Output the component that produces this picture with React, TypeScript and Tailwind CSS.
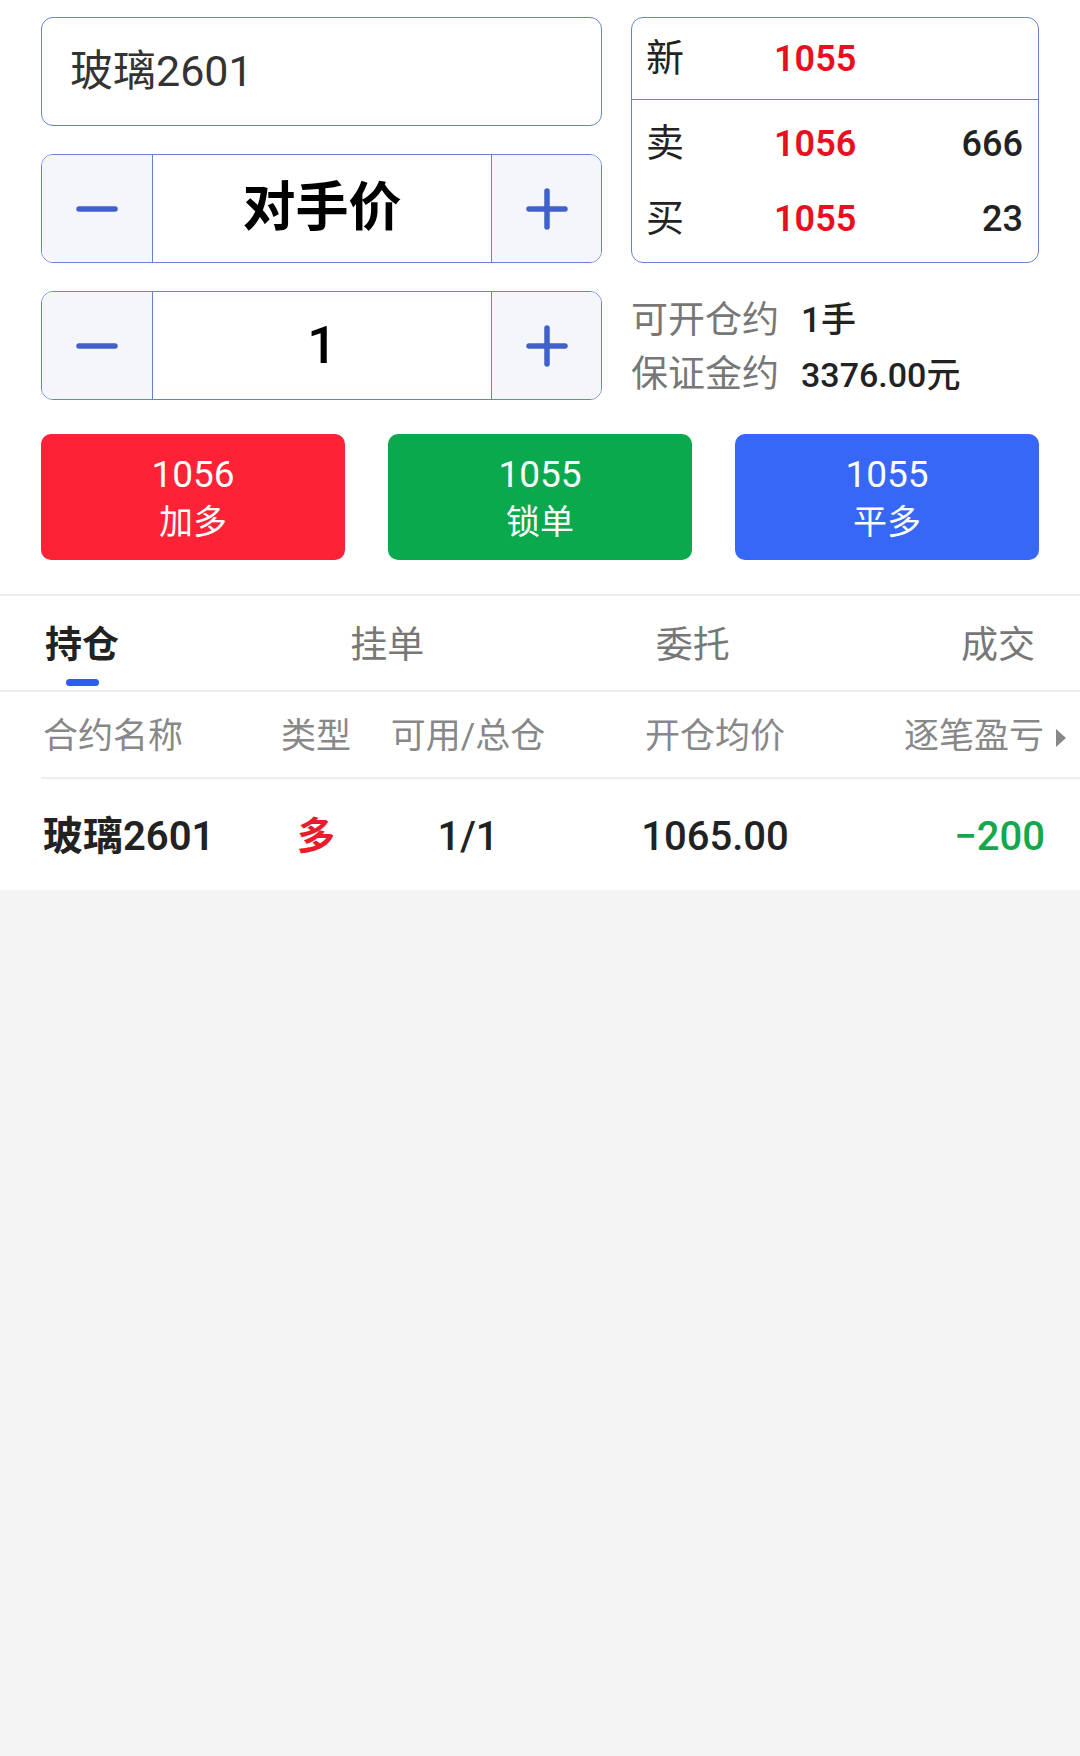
import { FC } from 'react';

const font = "font-['Roboto','Noto_Sans_CJK_SC',sans-serif]";

const MinusIcon: FC = () => (
    <svg width="42" height="42" viewBox="0 0 42 42">
        <line x1="3" y1="21" x2="39" y2="21" stroke="#4061c9" strokeWidth="5.5" strokeLinecap="round" />
    </svg>
);

const PlusIcon: FC = () => (
    <svg width="42" height="42" viewBox="0 0 42 42">
        <line x1="3" y1="21" x2="39" y2="21" stroke="#4061c9" strokeWidth="5.5" strokeLinecap="round" />
        <line x1="21" y1="3" x2="21" y2="39" stroke="#4061c9" strokeWidth="5.5" strokeLinecap="round" />
    </svg>
);

interface StepperProps {
    children: React.ReactNode;
}

const Stepper: FC<StepperProps> = ({ children }) => (
    <div className="flex h-[109px] rounded-[12px] border-[1.5px] border-[#6583d3] overflow-hidden">
        <div className="w-[111px] flex items-center justify-center bg-[#f4f6fc] border-r-[1.5px] border-[#6583d3]">
            <MinusIcon />
        </div>
        <div className="flex-1 flex items-center justify-center bg-white">{children}</div>
        <div className="w-[110px] flex items-center justify-center bg-[#f4f6fc] border-l-[1.5px] border-[#6583d3]">
            <PlusIcon />
        </div>
    </div>
);

const QuoteRow: FC<{ label: string; price: string; qty?: string }> = ({ label, price, qty }) => (
    <div className="flex items-center h-[75px] pl-[14px] pr-[15px]">
        <span className="w-[128px] text-[38px] text-[#222]">{label}</span>
        <span className="text-[36px] font-semibold text-[#ea0f1f]">{price}</span>
        <span className="ml-auto text-[36px] font-medium text-[#222]">{qty}</span>
    </div>
);

const ActionButton: FC<{ price: string; label: string; color: string }> = ({ price, label, color }) => (
    <div className={`flex-1 h-[126px] pt-[6px] rounded-[10px] flex flex-col items-center justify-center text-white ${color}`}>
        <span className="text-[37px] leading-[44px]">{price}</span>
        <span className="text-[34px] leading-[50px]">{label}</span>
    </div>
);

const App: FC = () => {
    const tabs = ['持仓', '挂单', '委托', '成交'];

    return (
        <div className={`min-h-[1756px] bg-[#f4f4f4] ${font}`}>
            <div className="bg-white">
                {/* order panel */}
                <div className="px-[41px] pt-[17px] pb-[34px]">
                    <div className="flex gap-[29px]">
                        <div className="w-[561px] flex flex-col gap-[28px]">
                            <div className="h-[109px] rounded-[12px] border-[1.5px] border-[#6583d3] flex items-center pl-[28px]">
                                <span className="text-[43px] text-[#333]">玻璃2601</span>
                            </div>
                            <Stepper>
                                <span className="text-[53px] font-bold text-black">对手价</span>
                            </Stepper>
                            <Stepper>
                                <span className="text-[52px] font-medium text-black">1</span>
                            </Stepper>
                        </div>
                        <div className="flex-1 flex flex-col">
                            <div className="h-[246px] rounded-[12px] border-[1.5px] border-[#6583d3] overflow-hidden">
                                <div className="h-[82px] border-b-[1.5px] border-[#6583d3] flex items-center">
                                    <QuoteRow label="新" price="1055" />
                                </div>
                                <div className="py-[6px]">
                                    <QuoteRow label="卖" price="1056" qty="666" />
                                    <QuoteRow label="买" price="1055" qty="23" />
                                </div>
                            </div>
                            <div className="mt-[33px] flex flex-col gap-[4px]">
                                <div className="flex items-center h-[50px]">
                                    <span className="text-[37px] text-[#777]">可开仓约</span>
                                    <span className="ml-[22px] text-[35px] font-medium text-[#222]">1手</span>
                                </div>
                                <div className="flex items-center h-[50px]">
                                    <span className="text-[37px] text-[#777]">保证金约</span>
                                    <span className="ml-[22px] text-[34px] font-medium text-[#222]">3376.00元</span>
                                </div>
                            </div>
                        </div>
                    </div>

                    <div className="mt-[34px] flex gap-[43px]">
                        <ActionButton price="1056" label="加多" color="bg-[#fe2237]" />
                        <ActionButton price="1055" label="锁单" color="bg-[#0aa94d]" />
                        <ActionButton price="1055" label="平多" color="bg-[#3767f7]" />
                    </div>
                </div>

                {/* tabs */}
                <div className="border-t-[2px] border-[#ececec] border-b-[2px] h-[98px] flex justify-between px-[45px] pt-[28px]">
                    {tabs.map((t, i) => (
                        <div key={t} className="flex flex-col items-center">
                            <span className={`text-[37px] leading-[44px] ${i === 0 ? 'font-semibold text-[#222]' : 'text-[#777]'}`}>{t}</span>
                            {i === 0 && <span className="mt-[11px] w-[33px] h-[7px] rounded-full bg-[#2d5cf0]" />}
                        </div>
                    ))}
                </div>

                {/* positions table */}
                <div className="pl-[41px]">
                    <div className="h-[87px] pt-[6px] flex items-center border-b-[2px] border-[#ededed] text-[35px] text-[#888] whitespace-nowrap">
                        <span className="w-[235px] pl-[2px]">合约名称</span>
                        <span className="w-[80px] text-center">类型</span>
                        <span className="w-[200px] text-center ml-[12px]">可用/总仓</span>
                        <span className="w-[160px] text-center ml-[67px]">开仓均价</span>
                        <span className="ml-auto flex items-center">
                            逐笔盈亏
                            <svg width="14" height="22" viewBox="0 0 14 22" className="ml-[10px] mr-[12px]">
                                <path d="M2 2 L12 11 L2 20 Z" fill="#888" />
                            </svg>
                        </span>
                    </div>
                    <div className="h-[111px] pt-[4px] flex items-center whitespace-nowrap">
                        <span className="w-[235px] pl-[2px] text-[40px] font-semibold text-[#222]">玻璃2601</span>
                        <span className="w-[80px] text-center text-[38px] font-semibold text-[#ea1c2c]">多</span>
                        <span className="w-[200px] text-center ml-[12px] text-[40px] font-medium text-[#222]">1/1</span>
                        <span className="w-[160px] text-center ml-[67px] text-[40px] font-medium text-[#222]">1065.00</span>
                        <span className="ml-auto mr-[35px] text-[40px] font-medium text-[#12a84b]">−200</span>
                    </div>
                </div>
            </div>
        </div>
    );
};

export default App;
